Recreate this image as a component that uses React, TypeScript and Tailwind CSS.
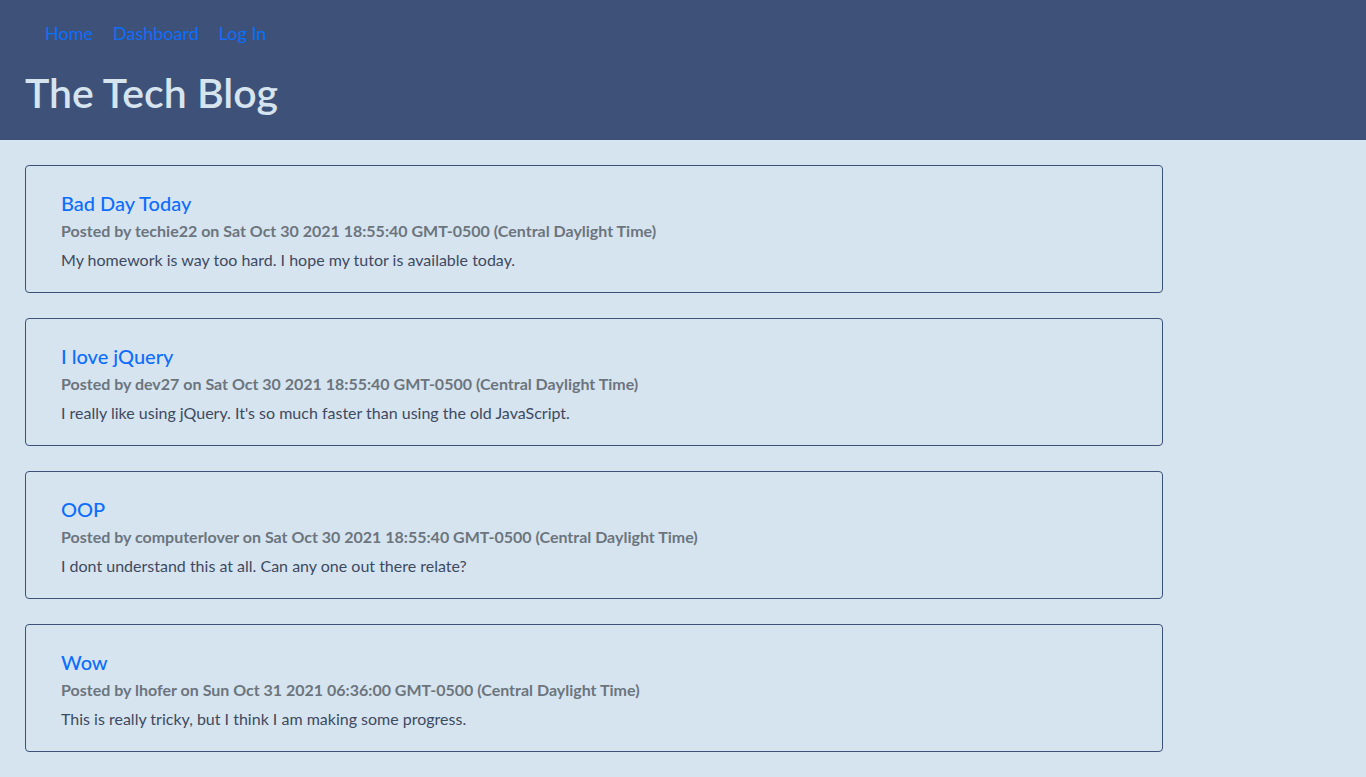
const posts = [
  {
    title: "Bad Day Today",
    author: "techie22",
    date: "Sat Oct 30 2021 18:55:40 GMT-0500 (Central Daylight Time)",
    body: "My homework is way too hard. I hope my tutor is available today.",
  },
  {
    title: "I love jQuery",
    author: "dev27",
    date: "Sat Oct 30 2021 18:55:40 GMT-0500 (Central Daylight Time)",
    body: "I really like using jQuery. It's so much faster than using the old JavaScript.",
  },
  {
    title: "OOP",
    author: "computerlover",
    date: "Sat Oct 30 2021 18:55:40 GMT-0500 (Central Daylight Time)",
    body: "I dont understand this at all. Can any one out there relate?",
  },
  {
    title: "Wow",
    author: "lhofer",
    date: "Sun Oct 31 2021 06:36:00 GMT-0500 (Central Daylight Time)",
    body: "This is really tricky, but I think I am making some progress.",
  },
];

export default function App() {
  return (
    <div
      className="min-h-[777px] bg-[#d6e4f0]"
      style={{ fontFamily: "Lato, 'Noto Sans', sans-serif" }}
    >
      <header className="h-[140px] bg-[#3e5279] px-[25px] pt-[19px]">
        <nav className="flex gap-[20px] pl-[20px] text-[18px] leading-[28px] text-[#0d6efd]">
          <a href="#">Home</a>
          <a href="#">Dashboard</a>
          <a href="#">Log In</a>
        </nav>
        <h1 className="mt-[22px] text-[41px] font-semibold leading-[48px] text-[#d6e4f0]">
          The Tech Blog
        </h1>
      </header>

      <main className="flex w-[1163px] flex-col gap-[25px] pl-[25px] pt-[25px] pb-[25px]">
        {posts.map((p) => (
          <div
            key={p.title}
            className="h-[128px] rounded-[4px] border border-[#3e5279] px-[35px] pt-[25px]"
          >
            <h2 className="text-[20px] font-medium leading-[24px] text-[#0d6efd]">
              {p.title}
            </h2>
            <p className="mt-[4px] text-[16px] font-bold leading-[24px] text-[#6c757d]">
              Posted by {p.author} on {p.date}
            </p>
            <p className="mt-[5px] text-[16px] leading-[24px] text-[#3e4a5f]">{p.body}</p>
          </div>
        ))}
      </main>
    </div>
  );
}
